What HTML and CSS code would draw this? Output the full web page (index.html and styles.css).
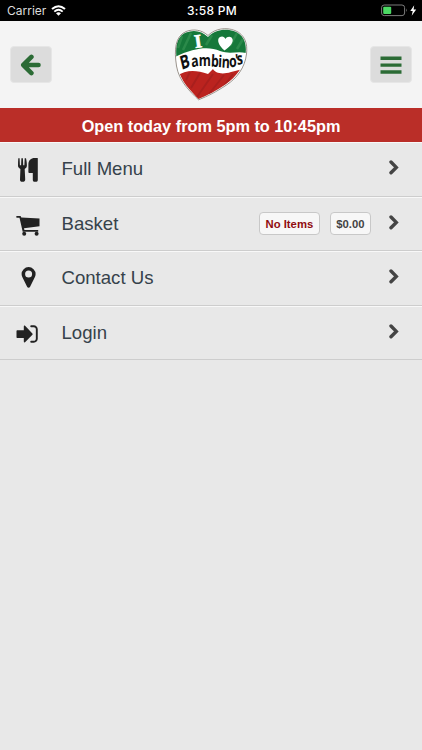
FILE: index.html
```html
<!DOCTYPE html>
<html lang="en">
<head>
    <meta charset="UTF-8">
    <meta name="viewport" content="width=device-width, initial-scale=1.0">
    <link rel="stylesheet" href="styles.css">
    <title>Bambino's</title>
</head>
<body>
    <div class="status-bar">
        <div class="carrier">
            <span class="carrier-name">Carrier</span>
            <svg width="15" height="11" viewBox="0 0 15 11">
                <path d="M1 4.1Q7.5-1.7 14 4.1" fill="none" stroke="#fff" stroke-width="2"/>
                <path d="M3.3 6.6Q7.5 3 11.7 6.6" fill="none" stroke="#fff" stroke-width="1.9"/>
                <path d="M5 8.2Q7.5 6.3 10 8.2L7.5 10.7Z" fill="#fff"/>
            </svg>
        </div>
        <span class="time">3:58 PM</span>
        <div class="power">
            <svg width="36" height="13" viewBox="0 0 36 13">
                <rect x=".6" y="1" width="23" height="10.6" rx="2.6" fill="none" stroke="#7b7b7b"/>
                <rect x="2.2" y="2.7" width="8" height="7.2" rx="1" fill="#4cd964"/>
                <path d="M25 4.5Q26.6 6.2 25 8Z" fill="#7b7b7b"/>
                <path d="M33.2 1.2 29.3 7h2.4l-1 4.7L35.2 5.5h-2.6Z" fill="#fff"/>
            </svg>
        </div>
    </div>

    <header class="header">
        <a class="header-btn">
            <svg width="22" height="22" viewBox="0 0 22 22">
                <path d="M11.4 2.9 3.3 11l8.1 8.1M3.9 11H18.5" fill="none" stroke="#2b6b35" stroke-width="4.6" stroke-linecap="round" stroke-linejoin="round"/>
            </svg>
        </a>
        <svg class="logo" width="76" height="76" viewBox="8 6 76 76">
            <defs>
                <clipPath id="heart">
                    <path d="M33.5 78C26 70 15 60 12.5 45C10 30 10 16 21 11.5C29 8.5 37 10 43 16C50 8.5 61 7 70 10.5C79 14 82 23 80.5 33C79 46 71 56 61 63C51 70 43 74 33.5 78Z"/>
                </clipPath>
            </defs>
            <path d="M33.5 78C26 70 15 60 12.5 45C10 30 10 16 21 11.5C29 8.5 37 10 43 16C50 8.5 61 7 70 10.5C79 14 82 23 80.5 33C79 46 71 56 61 63C51 70 43 74 33.5 78Z" fill="#fff" stroke="#fff" stroke-width="3"/>
            <g clip-path="url(#heart)">
                <path d="M8 5H85V33C73 29 66 34 55 30C43 25 28 27 8 37Z" fill="#17783b"/>
                <path d="M10 56C21 48 31 49 43 53L48 48C50 52 57 54 66 51L78 48V80H8Z" fill="#bb2420"/>
                <path d="m17 15-4 12M26 12l-8 17M47 14l-6 10M72 12l-7 13M78 18l-6 10" stroke="#3c9958" stroke-width="2.5" opacity=".55"/>
                <path d="m25 51-4 8M35 52l-9 15M48 53 32 76M59 54 44 73M68 53l-9 12" stroke="#8f1b19" stroke-width="2" opacity=".4"/>
            </g>
            <path d="M33.5 78.8C25.5 71 14 60.5 11.5 45C9 29 10 15 21 10.5C29 7.5 37 9 43 14.5C50 7.5 61 6 70 9.5C80 13.5 82.8 23 81.5 33C80 46.5 72 57 61.5 64C51 71 43 75 33.5 78.8Z" fill="none" stroke="#6b6258" stroke-width=".7"/>
            <text x="29.5" y="26.8" class="logo-i" transform="rotate(-8 32 21)">I</text>
            <path d="M59.5 29.5C54 25 51 18.5 55 16C57.5 14.5 59.5 16 60.5 18C62 14.5 67.5 15 67.7 19C67.8 23 64 26 59.5 29.5Z" fill="#fff"/>
            <text class="logo-word" transform="scale(.75 1)" x="22.5 35.8 45 61 70.7 75.3 85.6 94.2 96.5" y="49 46.5 45.3 45.5 46 46.6 46.2 45 44" rotate="-18 -10 0 4 4 4 -3 -6 -8"><tspan class="logo-cap">B</tspan>ambino's</text>
        </svg>
        <a class="header-btn">
            <svg width="22" height="18" viewBox="0 0 22 18">
                <path d="M.5 2.2h21M.5 9.1h21M.5 16h21" stroke="#2b6b35" stroke-width="3.4"/>
            </svg>
        </a>
    </header>

    <div class="banner">Open today from 5pm to 10:45pm</div>

    <nav class="menu">
        <a class="menu-item">
            <svg class="icon" width="26" height="26" viewBox="0 -1 26 26">
                <path d="M3.3 1.3h1.3l.3 7h1.2l.3-7h1.5l.3 7h1.2l.3-7H11c.6 2.7.9 5.2.9 7.2 0 1.8-1 2.8-2.2 3.4l.5 10.600c0 1.8-.9 2.3-2.7 2.3s-2.6-.6-2.5-2.3l.4-10.600c-1.5-.6-2.4-1.7-2.4-3.4 0-2 .1-4.5.3-7.2Z"/>
                <path d="M22.8 1.4v21.300c0 1.6-.8 2.1-2.5 2.1s-2.5-.5-2.5-2.1v-6.800h-3.6c-.6 0-.8-.3-.8-.9V7.4c0-4 2.6-6.3 6.2-6.3h2.6c.4 0 .6.1.6.3Z"/>
            </svg>
            <span class="label">Full Menu</span>
            <svg class="chevron" width="10" height="15" viewBox="0 0 10 15"><path d="m2 2 5.3 5.4L2 12.8"/></svg>
        </a>
        <a class="menu-item">
            <svg class="icon" width="26" height="26" viewBox="0 0 26 26">
                <path d="M2 5h3.600l.7 1.6 18.200.9v7.700L9 17.200l.4 1.900h13.800v1.700H7.700L4.500 6.700H2c-1.100 0-1.100-1.700 0-1.700Z"/>
                <circle cx="9.2" cy="22.8" r="2"/>
                <circle cx="21.6" cy="22.8" r="2"/>
            </svg>
            <span class="label">Basket</span>
            <span class="badge badge-items">No Items</span>
            <span class="badge">$0.00</span>
            <svg class="chevron" width="10" height="15" viewBox="0 0 10 15"><path d="m2 2 5.3 5.4L2 12.8"/></svg>
        </a>
        <a class="menu-item">
            <svg class="icon" width="26" height="26" viewBox="0 0 26 26">
                <path fill-rule="evenodd" d="M13.6 2.1a7 7 0 0 1 7 7c0 1.2-.2 2-.7 3l-4.8 9.7c-.6 1.3-2.4 1.3-3 0L7.3 12.1c-.5-1-.7-1.8-.7-3a7 7 0 0 1 7-7Zm0 3.5a3.5 3.5 0 1 0 0 7 3.5 3.5 0 0 0 0-7Z"/>
            </svg>
            <span class="label">Contact Us</span>
            <svg class="chevron" width="10" height="15" viewBox="0 0 10 15"><path d="m2 2 5.3 5.4L2 12.8"/></svg>
        </a>
        <a class="menu-item">
            <svg class="icon" width="26" height="26" viewBox="0 0 26 26">
                <path d="M1.5 11.2c0-.6.3-1 1-1h6.3V6.5c0-1 .8-1.2 1.5-.5l7.1 7.4c.4.4.4.9 0 1.300l-7.100 7.400c-.7.7-1.5.4-1.5-.5v-3.700H2.500c-.7 0-1-.4-1-1Z"/>
                <path d="M16.2 6.2h2.600a3 3 0 0 1 3 3v9.600a3 3 0 0 1-3 3h-2.600" fill="none" stroke="#222" stroke-width="1.9" stroke-linecap="round"/>
            </svg>
            <span class="label">Login</span>
            <svg class="chevron" width="10" height="15" viewBox="0 0 10 15"><path d="m2 2 5.3 5.4L2 12.8"/></svg>
        </a>
    </nav>
</body>
</html>
```
FILE: styles.css
```css
* {
    box-sizing: border-box;
}

body {
    margin: 0;
    min-height: 100vh;
    background-color: #e8e8e8;
    font-family: "Liberation Sans", Arial, sans-serif;
}

svg {
    display: block;
    flex: none;
}

.status-bar {
    display: grid;
    grid-template-columns: 1fr auto 1fr;
    align-items: center;
    height: 21px;
    padding: 0 5px 0 7px;
    background-color: #000;
    color: #fff;
    font-family: Inter, sans-serif;
    font-size: 12px;
    line-height: 21px;
}

.carrier {
    display: flex;
    align-items: center;
    gap: 5px;
}

.carrier-name {
    color: #ddd;
}

.time {
    font-weight: 500;
    letter-spacing: 0.3px;
}

.power {
    justify-self: end;
}

.header {
    display: flex;
    justify-content: space-between;
    align-items: center;
    height: 87px;
    padding: 0 10px;
    background-color: #f4f4f4;
}

.header-btn {
    display: flex;
    justify-content: center;
    align-items: center;
    width: 42px;
    height: 37px;
    border: 1px solid #e6e6e6;
    border-radius: 4px;
    background-color: #dcdcdc;
}

.logo-i {
    fill: #fff;
    stroke: #fff;
    stroke-width: 0.6px;
    font-family: "Liberation Serif", serif;
    font-size: 19px;
    font-weight: bold;
}

.logo-word {
    fill: #111;
    font-family: "Open Sans", sans-serif;
    font-size: 16.5px;
    font-weight: bold;
}

.logo-cap {
    font-size: 19px;
}

.banner {
    height: 34px;
    background-color: #ba2e28;
    color: #fff;
    font-size: 16.3px;
    font-weight: bold;
    line-height: 36px;
    text-align: center;
}

.menu-item {
    display: flex;
    align-items: center;
    height: 54.6px;
    padding: 0 23px 0 15px;
    border-top: 1px solid #f8f8f8;
    border-bottom: 1px solid #cdcdcd;
    color: #36424b;
    font-size: 18.6px;
}

.icon {
    margin-right: 20.5px;
    fill: #222;
}

.label {
    flex: 1;
}

.badge {
    height: 23px;
    margin-right: 10px;
    padding: 0 5.5px;
    border: 1px solid #c8c8c8;
    border-radius: 4px;
    background-color: #f7f7f7;
    color: #444;
    font-size: 11.3px;
    font-weight: bold;
    line-height: 22px;
}

.badge-items {
    color: #900c10;
}

.chevron {
    margin: -3px 0 0 8px;
    fill: none;
    stroke: #444;
    stroke-width: 3.4;
    stroke-linecap: round;
}
```
